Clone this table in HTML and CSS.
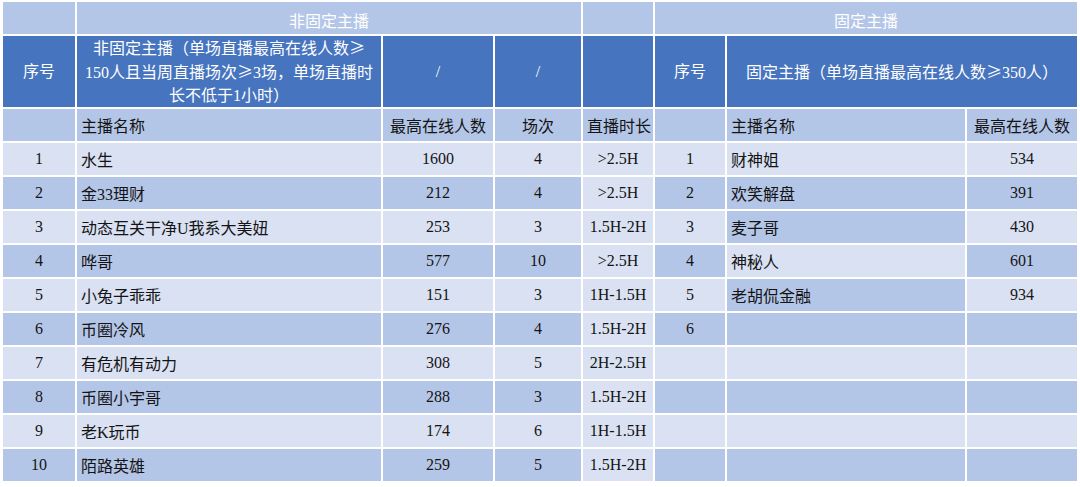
FILE: index.html
```html
<!DOCTYPE html>
<html lang="zh-CN">
<head>
<meta charset="utf-8">
<title>主播统计</title>
<link rel="stylesheet" href="styles.css">
</head>
<body>
<table class="sheet">
  <colgroup>
    <col class="c-idx">
    <col class="c-name">
    <col class="c-max">
    <col class="c-ses">
    <col class="c-dur">
    <col class="c-ridx">
    <col class="c-rname">
    <col class="c-rmax">
  </colgroup>
  <thead>
    <tr class="band">
      <td></td>
      <td colspan="3" class="band-title">非固定主播</td>
      <td></td>
      <td colspan="3" class="band-title">固定主播</td>
    </tr>
    <tr class="head">
      <th>序号</th>
      <th class="wrap">非固定主播（单场直播最高在线人数<span class="ge">≥</span><br>150人且当周直播场次<span class="ge">≥</span>3场，单场直播时<br>长不低于1小时）</th>
      <th>/</th>
      <th>/</th>
      <th></th>
      <th>序号</th>
      <th colspan="2">固定主播（单场直播最高在线人数<span class="ge">≥</span>350人）</th>
    </tr>
    <tr class="sub">
      <td></td>
      <td class="left">主播名称</td>
      <td>最高在线人数</td>
      <td>场次</td>
      <td>直播时长</td>
      <td></td>
      <td class="left">主播名称</td>
      <td>最高在线人数</td>
    </tr>
  </thead>
  <tbody>
    <tr class="odd">
      <td>1</td><td class="left">水生</td><td>1600</td><td>4</td><td class="dur">&gt;2.5H</td>
      <td>1</td><td class="left">财神姐</td><td>534</td>
    </tr>
    <tr class="even">
      <td>2</td><td class="left">金33理财</td><td>212</td><td>4</td><td class="dur">&gt;2.5H</td>
      <td>2</td><td class="left">欢笑解盘</td><td>391</td>
    </tr>
    <tr class="odd">
      <td>3</td><td class="left">动态互关干净U我系大美妞</td><td>253</td><td>3</td><td class="dur">1.5H-2H</td>
      <td>3</td><td class="left dk">麦子哥</td><td>430</td>
    </tr>
    <tr class="even">
      <td>4</td><td class="left">哗哥</td><td>577</td><td>10</td><td class="dur">&gt;2.5H</td>
      <td>4</td><td class="left lt">神秘人</td><td>601</td>
    </tr>
    <tr class="odd">
      <td>5</td><td class="left">小兔子乖乖</td><td>151</td><td>3</td><td class="dur">1H-1.5H</td>
      <td>5</td><td class="left dk">老胡侃金融</td><td>934</td>
    </tr>
    <tr class="even">
      <td>6</td><td class="left">币圈冷风</td><td>276</td><td>4</td><td class="dur">1.5H-2H</td>
      <td>6</td><td class="left"></td><td></td>
    </tr>
    <tr class="odd">
      <td>7</td><td class="left">有危机有动力</td><td>308</td><td>5</td><td class="dur">2H-2.5H</td>
      <td></td><td class="left"></td><td></td>
    </tr>
    <tr class="even">
      <td>8</td><td class="left">币圈小宇哥</td><td>288</td><td>3</td><td class="dur">1.5H-2H</td>
      <td></td><td class="left"></td><td></td>
    </tr>
    <tr class="odd">
      <td>9</td><td class="left">老K玩币</td><td>174</td><td>6</td><td class="dur">1H-1.5H</td>
      <td></td><td class="left"></td><td></td>
    </tr>
    <tr class="even">
      <td>10</td><td class="left">陌路英雄</td><td>259</td><td>5</td><td class="dur">1.5H-2H</td>
      <td></td><td class="left"></td><td></td>
    </tr>
  </tbody>
</table>
</body>
</html>
```

FILE: styles.css
```css
html, body {
  margin: 0;
  padding: 0;
  background: #ffffff;
}

body {
  padding: 0 0 0 1px;
  font-family: "Liberation Serif", "Noto Sans CJK SC", serif;
  font-size: 16px;
  color: #141414;
}

.sheet {
  border-collapse: collapse;
  table-layout: fixed;
  width: 1076px;
}

.c-idx { width: 74px; }
.c-name { width: 306px; }
.c-max { width: 112px; }
.c-ses { width: 88px; }
.c-dur { width: 72px; }
.c-ridx { width: 72px; }
.c-rname { width: 240px; }
.c-rmax { width: 112px; }

.sheet td,
.sheet th {
  border: 2px solid #ffffff;
  padding: 0 4px;
  text-align: center;
  vertical-align: middle;
  font-weight: normal;
  white-space: nowrap;
  overflow: hidden;
}

.band td {
  height: 28px;
  background: #b4c6e7;
  color: #ffffff;
  padding-top: 4px;
}

.head th {
  height: 70px;
  background: #4674be;
  color: #ffffff;
  line-height: 23px;
}

.head .wrap {
  white-space: normal;
  padding: 0 2px;
}

.ge {
  font-family: "Noto Sans CJK SC", sans-serif;
}

.sub td {
  height: 32px;
  background: #b4c6e7;
}

tbody td {
  height: 32px;
}

.sheet .left {
  text-align: left;
}

.odd td { background: #d9e1f2; }
.even td { background: #b4c6e7; }

.sheet td.dur { background: #d9e1f2; }
.sheet td.dk { background: #b4c6e7; }
.sheet td.lt { background: #d9e1f2; }
```
